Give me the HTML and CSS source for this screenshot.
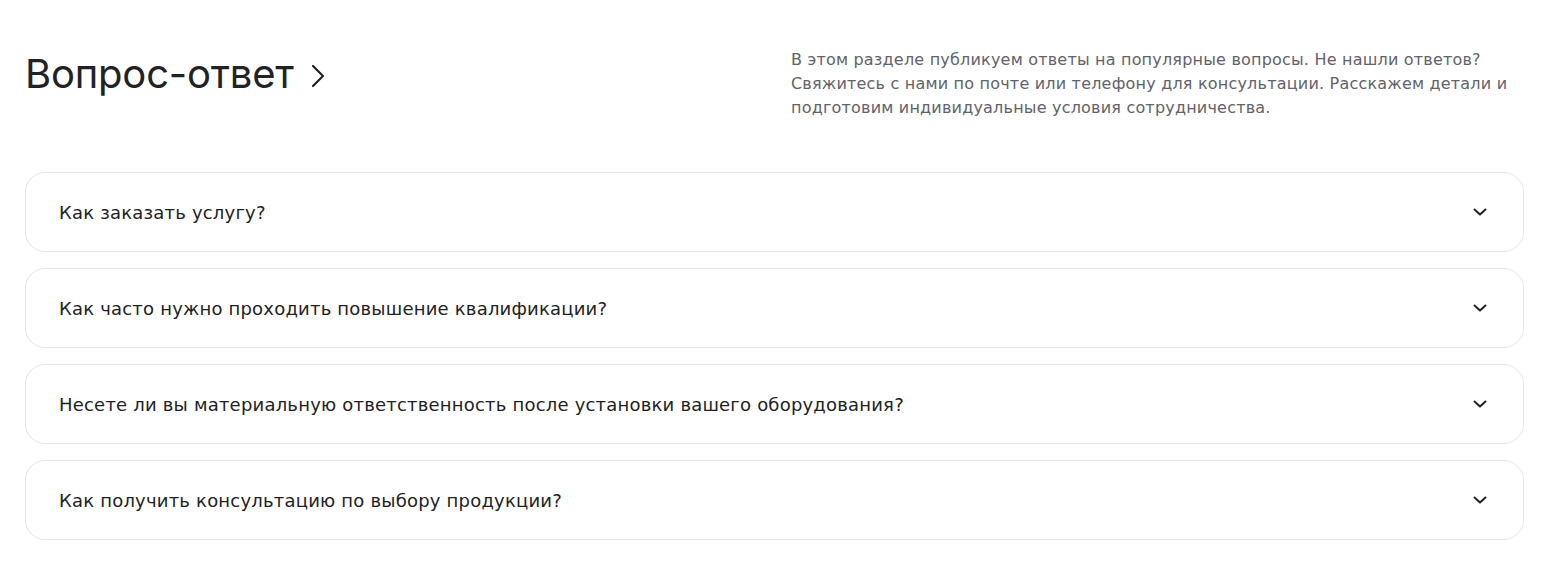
FILE: index.html
```html
<!DOCTYPE html>
<html lang="ru">
  <head>
    <meta charset="utf-8">
    <meta name="viewport" content="width=device-width, initial-scale=1.0">
    <title>Вопрос-ответ</title>
    <link rel="stylesheet" href="styles.css">
  </head>
  <body>
    <section class="faq">
      <div class="faq-head">
        <h2 class="faq-title">
          <a href="#">Вопрос-ответ
            <svg class="faq-title-arrow" viewBox="0 0 14 24" width="14" height="24" aria-hidden="true">
              <path d="M2 2 L12 12 L2 22" fill="none" stroke="currentColor" stroke-width="2.2" stroke-linecap="round" stroke-linejoin="round"/>
            </svg>
          </a>
        </h2>
        <p class="faq-lead">В этом разделе публикуем ответы на популярные вопросы. Не нашли ответов?<br>
          Свяжитесь с нами по почте или телефону для консультации. Расскажем детали и<br>
          подготовим индивидуальные условия сотрудничества.</p>
      </div>

      <div class="faq-list">
        <details class="faq-item">
          <summary>Как заказать услугу?
            <svg class="chev" viewBox="0 0 14 8" width="14" height="8"><path d="M1.5 1.5 L7 6.5 L12.5 1.5" fill="none" stroke="currentColor" stroke-width="2" stroke-linecap="round" stroke-linejoin="round"/></svg>
          </summary>
        </details>
        <details class="faq-item">
          <summary>Как часто нужно проходить повышение квалификации?
            <svg class="chev" viewBox="0 0 14 8" width="14" height="8"><path d="M1.5 1.5 L7 6.5 L12.5 1.5" fill="none" stroke="currentColor" stroke-width="2" stroke-linecap="round" stroke-linejoin="round"/></svg>
          </summary>
        </details>
        <details class="faq-item">
          <summary>Несете ли вы материальную ответственность после установки вашего оборудования?
            <svg class="chev" viewBox="0 0 14 8" width="14" height="8"><path d="M1.5 1.5 L7 6.5 L12.5 1.5" fill="none" stroke="currentColor" stroke-width="2" stroke-linecap="round" stroke-linejoin="round"/></svg>
          </summary>
        </details>
        <details class="faq-item">
          <summary>Как получить консультацию по выбору продукции?
            <svg class="chev" viewBox="0 0 14 8" width="14" height="8"><path d="M1.5 1.5 L7 6.5 L12.5 1.5" fill="none" stroke="currentColor" stroke-width="2" stroke-linecap="round" stroke-linejoin="round"/></svg>
          </summary>
        </details>
      </div>
    </section>
  </body>
</html>
```

FILE: styles.css
```css
html { box-sizing : border-box }
*, *:before, *:after { box-sizing : inherit }

:root {
  --c-bg : #ffffff;
  --c-fg : #222226;
  --c-fg-2 : #62626c;
  --c-line : #e5e5f0;

  --f-head : Inter, "Noto Sans", sans-serif;
  --f-prop : "DejaVu Sans", Inter, sans-serif;
}

body {
  margin : 0;
  background-color : var(--c-bg);
  color : var(--c-fg);
  font-family : var(--f-prop);
}

.faq {
  padding : 48px 23px 0 25px;
}

.faq-head {
  display : flex;
  justify-content : space-between;
  align-items : flex-start;
}

.faq-title {
  margin : 0;
  padding-top : 2px;
  font-family : var(--f-head);
  font-size : 40px;
  font-weight : 400;
  line-height : 48px;
  letter-spacing : -0.2px;
}

.faq-title a {
  display : inline-flex;
  align-items : center;
  gap : 17px;
  color : inherit;
  text-decoration : none;
}

.faq-title-arrow { margin-top : 3px }

.faq-lead {
  margin : 0;
  width : 733px;
  font-size : 16px;
  line-height : 24px;
  letter-spacing : 0.2px;
  color : var(--c-fg-2);
}

.faq-list {
  display : flex;
  flex-direction : column;
  gap : 16px;
  margin-top : 52px;
}

.faq-item {
  border : 1px solid var(--c-line);
  border-radius : 20px;
}

.faq-item summary {
  display : flex;
  justify-content : space-between;
  align-items : center;
  height : 78px;
  padding : 0 36px 0 33px;
  font-size : 18px;
  letter-spacing : 0.2px;
  cursor : pointer;
  list-style : none;
}

.faq-item summary::-webkit-details-marker { display : none }

.chev { color : var(--c-fg) }
```
